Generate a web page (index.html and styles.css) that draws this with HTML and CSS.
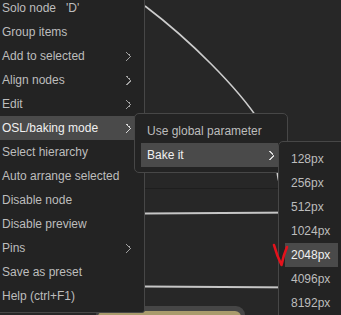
FILE: index.html
```html
<!DOCTYPE html>
<html lang="en">
<head>
  <meta charset="UTF-8">
  <meta name="viewport" content="width=device-width, initial-scale=1.0">
  <title>Node context menu</title>
  <link rel="stylesheet" href="styles.css">
</head>
<body>
  <div class="canvas">
    <!-- node graph behind the menu -->
    <svg class="graph" width="341" height="315" viewBox="0 0 341 315">
      <path class="curve" d="M145,6 C190,40 238,88 260,122 S274,166 279,182"/>
      <line class="edge-dark" x1="145" y1="188.5" x2="300" y2="188.5"/>
      <line class="edge" x1="145" y1="213.5" x2="300" y2="212.5"/>
      <line class="edge" x1="145" y1="286.5" x2="300" y2="287.5"/>
      <rect class="node-frame" x="96" y="306" width="149" height="30" rx="9"/>
      <rect class="node-fill" x="98" y="311" width="143" height="30" rx="6"/>
    </svg>

    <ul class="menu main-menu">
      <li class="item">Solo node&nbsp;&nbsp;&nbsp;'D'</li>
      <li class="item">Group items</li>
      <li class="item">Add to selected <span class="arrow"></span></li>
      <li class="item">Align nodes <span class="arrow"></span></li>
      <li class="item">Edit <span class="arrow"></span></li>
      <li class="item active">OSL/baking mode <span class="arrow"></span></li>
      <li class="item">Select hierarchy</li>
      <li class="item">Auto arrange selected</li>
      <li class="item">Disable node</li>
      <li class="item">Disable preview</li>
      <li class="item">Pins <span class="arrow"></span></li>
      <li class="item">Save as preset</li>
      <li class="item">Help (ctrl+F1)</li>
    </ul>

    <ul class="menu sub-osl">
      <li class="item">Use global parameter</li>
      <li class="item active">Bake it <span class="arrow"></span></li>
    </ul>

    <ul class="menu sub-bake">
      <li class="item">128px</li>
      <li class="item">256px</li>
      <li class="item">512px</li>
      <li class="item">1024px</li>
      <li class="item active">2048px</li>
      <li class="item">4096px</li>
      <li class="item">8192px</li>
    </ul>

    <!-- hand drawn check mark -->
    <svg class="tick" width="341" height="315" viewBox="0 0 341 315">
      <path d="M274,245 Q277,256 281.5,265 Q283.5,255 287,247"/>
    </svg>
  </div>
</body>
</html>
```

FILE: styles.css
```css
body {
  margin: 0;
  background-color: #272727;
  font-family: "Liberation Sans", Arial, sans-serif;
  font-size: 12px;
  overflow: hidden;
}
.canvas {
  position: relative;
  width: 341px;
  height: 315px;
  overflow: hidden;
}
.graph,
.tick {
  position: absolute;
  left: 0;
  top: 0;
}
.curve {
  fill: none;
  stroke: #cdcdcd;
  stroke-width: 1.6;
}
.edge {
  stroke: #c6c6c6;
  stroke-width: 2;
}
.edge-dark {
  stroke: #1e1e1e;
  stroke-width: 1;
}
.node-frame {
  fill: #464646;
}
.node-fill {
  fill: #a99b6c;
}
.menu {
  position: absolute;
  list-style: none;
  margin: 0;
  padding: 4px 9px 4px 6px;
  box-sizing: border-box;
  background-color: #232323;
  border: 1px solid #474747;
  border-radius: 5px;
}
.item {
  display: flex;
  justify-content: space-between;
  align-items: center;
  height: 24px;
  padding: 0 4px 0 6px;
  color: #bdbdbd;
  white-space: nowrap;
}
.item.active {
  background-color: #4a4a4a;
  color: #f0f0f0;
}
.arrow {
  --c: #a0a0a0;
  width: 5px;
  height: 9px;
  background: linear-gradient(to top right, transparent 44%, var(--c) 44%, var(--c) 60%, transparent 60%) top / 5px 5px no-repeat,
              linear-gradient(to bottom right, transparent 44%, var(--c) 44%, var(--c) 60%, transparent 60%) bottom / 5px 5px no-repeat;
}
.item.active .arrow {
  --c: #d8d8d8;
}
.main-menu {
  left: -11px;
  top: -9px;
  width: 156px;
  border-radius: 0 0 3px 0;
}
.sub-osl {
  left: 134px;
  top: 113px;
  width: 154px;
  padding-top: 5px;
  padding-bottom: 5px;
}
.sub-bake {
  left: 278px;
  top: 141px;
  width: 70px;
  padding-top: 5px;
}
.tick path {
  fill: none;
  stroke: #e4121c;
  stroke-width: 2.6;
  stroke-linecap: round;
  stroke-linejoin: round;
}
```
